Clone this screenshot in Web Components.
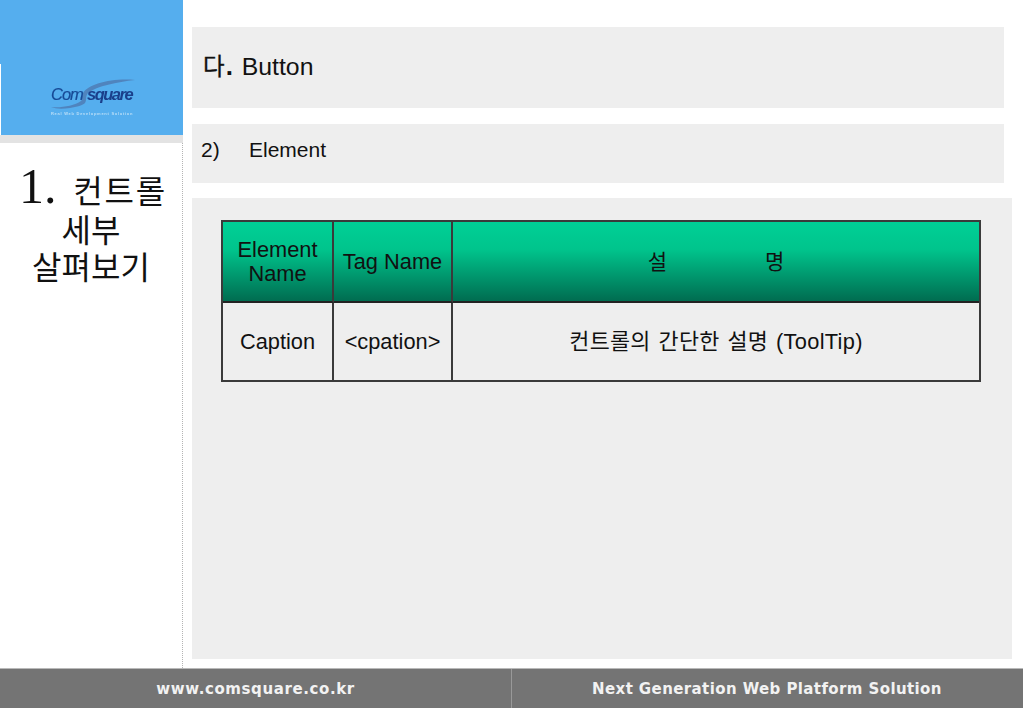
<!DOCTYPE html>
<html lang="ko"><head><meta charset="utf-8"><title>Button</title>
<style>
html,body{margin:0;height:708px;overflow:hidden;background:#fff;font-family:"Liberation Sans","Noto Sans CJK KR",sans-serif;color:#000}
</style></head><body>
<slide-page>
  <side-bar slot="side"></side-bar>
  <text-panel slot="main" size="24.8" height="81" lift="6" style="margin-bottom:16px"><span style="font-size:23.5px;margin-left:2px;-webkit-text-stroke:.3px #111">다</span><b style="font-size:26px;margin:0 2px 0 1px">.</b> Button</text-panel>
  <text-panel slot="main" size="21" height="59" lift="7" style="margin-bottom:15px"><span style="display:inline-block;width:48px">2)</span>Element</text-panel>
  <content-panel slot="main"><element-table></element-table></content-panel>
</slide-page>
<script>
function def(name,html){customElements.define(name,class extends HTMLElement{
  constructor(){super();this.attachShadow({mode:'open'}).innerHTML=html;}
  connectedCallback(){
    if(this.hasAttribute('size'))this.style.setProperty('--size',this.getAttribute('size')+'px');
    if(this.hasAttribute('height'))this.style.setProperty('--h',this.getAttribute('height')+'px');
    if(this.hasAttribute('lift'))this.style.setProperty('--lift',this.getAttribute('lift')+'px');
  }
});}
def('slide-page',`<style>
:host{display:grid;grid-template-columns:183px 1fr;grid-template-rows:668px 40px;width:1023px;height:708px}
main{padding:27px 11px 0 9px;display:flex;flex-direction:column;min-width:0}
foot-bar{grid-column:1/3}
</style><slot name="side"></slot><main><slot name="main"></slot></main><foot-bar></foot-bar>`);
def('side-bar',`<style>
:host{display:flex;flex-direction:column;border-right:1px dotted #b4b4b4;box-sizing:border-box;width:183px}
.blue{height:135px;background:#55aeee;display:flex;align-items:flex-end;justify-content:center;position:relative;margin-right:-1px}
.notch{position:absolute;left:0;top:64px;bottom:0;width:1px;background:#fff}
.gray{height:8px;background:#e3e3e3;margin-right:-1px}
h1{margin:17px 0 0;font-weight:400;text-align:center;font-family:"Liberation Serif","Noto Sans CJK KR",serif;font-size:32px;line-height:37px;color:#111}
h1 b{font-weight:400;font-size:50px;letter-spacing:0;margin-right:7px}
h1 .l{display:block}
.first{line-height:53px;height:53px;white-space:nowrap;letter-spacing:1.8px;padding-left:4px}
</style><div class="blue"><div class="notch"></div><brand-logo></brand-logo></div><div class="gray"></div>
<h1><span class="l first"><b>1.</b> 컨트롤</span><span class="l">세부</span><span class="l">살펴보기</span></h1>`);
def('brand-logo',`<style>
:host{display:block;position:relative;width:90px;height:41px;margin:0 0 15px 1px;filter:blur(.5px)}
svg{position:absolute;left:0;top:0}
.n{position:absolute;left:4px;top:6px;font:italic 400 16.5px "Liberation Sans",sans-serif;color:#174a96;letter-spacing:-1px;white-space:nowrap;-webkit-text-stroke:.2px #174a96}
.s{position:absolute;left:40px;top:6px;font:italic 700 16.5px "Liberation Sans",sans-serif;color:#1a3f8b;letter-spacing:-1.5px;white-space:nowrap}
.t{position:absolute;left:4px;top:32px;font:700 4px "Liberation Sans",sans-serif;color:#bcdff7;letter-spacing:.72px;white-space:nowrap}
</style><svg width="90" height="41" viewBox="0 0 90 41"><path d="M36 14C42 5 64 -1 88 1C70 3 50 7 41 14C38 18 40 21 38 24C36 26 30 28 23 29C15 30 9 30 4 28C14 29 27 27 34 22C36 20 34 18 36 14Z" fill="#4f7fb8" opacity=".9"/></svg><span class="n">Com</span><span class="s">square</span><span class="t">Real Web Development Solution</span>`);
def('text-panel',`<style>
:host{display:flex;align-items:center;box-sizing:border-box;height:var(--h);background:#eee;padding:0 8px var(--lift) 9px;margin-right:8px;font-size:var(--size);color:#111}
div{white-space:pre-wrap}
</style><div><slot></slot></div>`);
def('content-panel',`<style>
:host{display:block;box-sizing:border-box;height:461px;background:#eee;padding:22px 31px 0 29px}
</style><slot></slot>`);
def('element-table',`<style>
:host{display:grid;grid-template-columns:111px 119px 1fr;grid-template-rows:81px 1fr;width:760px;height:162px;box-sizing:border-box;border:2px solid #3a3a3a;font-size:21.8px;color:#111;line-height:24px;text-align:center}
div{display:flex;align-items:center;justify-content:center;box-sizing:border-box}
.h{background:linear-gradient(#00d096 0%,#00c48c 35%,#006c50 100%);border-bottom:2px solid #222}
.r{border-right:2px solid #3a3a3a}
.sp{gap:98px}
.k{font-size:21px}
.d{letter-spacing:.3px;word-spacing:1.5px}
</style>
<div class="h r">Element<br>Name</div>
<div class="h r">Tag Name</div>
<div class="h k sp"><span>설</span><span>명</span></div>
<div class="r">Caption</div>
<div class="r">&lt;cpation&gt;</div>
<div class="d">컨트롤의 간단한 설명 (ToolTip)</div>`);
def('foot-bar',`<style>
:host{display:grid;grid-template-columns:511px 1fr;height:40px;background:#747474;border-top:1px solid #b9b9b9;box-sizing:border-box;font:700 15px "DejaVu Sans",sans-serif;color:#f2f2f2}
span{display:flex;align-items:center;justify-content:center;letter-spacing:.6px}
span+span{border-left:1px solid #999;padding-right:1px;letter-spacing:.4px}
</style><span>www.comsquare.co.kr</span><span>Next Generation Web Platform Solution</span>`);
</script>
</body></html>
